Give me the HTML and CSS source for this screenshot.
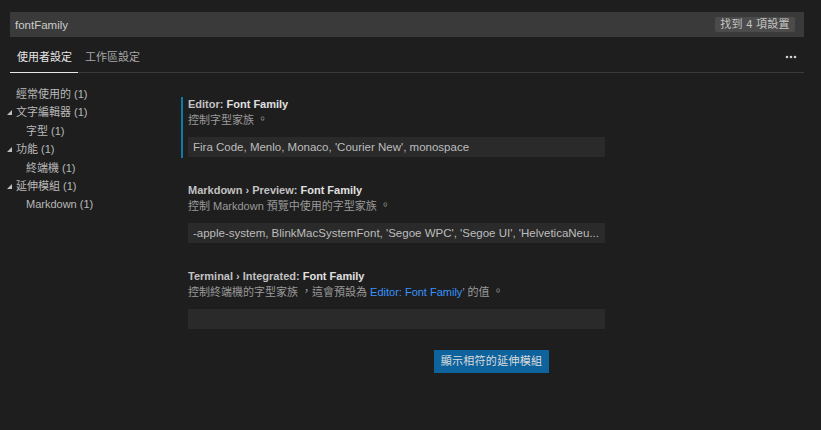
FILE: index.html
```html
<!DOCTYPE html>
<html lang="zh-Hant">
<head>
<meta charset="utf-8">
<title>設定</title>
<link rel="stylesheet" href="styles.css">
</head>
<body>
<div class="page">
  <div class="search">
    <span class="search-text">fontFamily</span>
    <span class="badge">找到 4 項設置</span>
  </div>
  <div class="tabs">
    <div class="tab active">使用者設定</div>
    <div class="tab">工作區設定</div>
    <div class="tabs-spacer"></div>
    <svg class="more" width="12" height="4" viewBox="0 0 12 4"><circle cx="2" cy="2" r="1.3"/><circle cx="6" cy="2" r="1.3"/><circle cx="10" cy="2" r="1.3"/></svg>
  </div>
  <div class="main">
    <div class="tree">
      <div class="row lvl1">經常使用的 (1)</div>
      <div class="row lvl1"><svg class="twist" width="5" height="5" viewBox="0 0 5 5"><polygon points="5,0 5,5 0,5"/></svg>文字編輯器 (1)</div>
      <div class="row lvl2">字型 (1)</div>
      <div class="row lvl1"><svg class="twist" width="5" height="5" viewBox="0 0 5 5"><polygon points="5,0 5,5 0,5"/></svg>功能 (1)</div>
      <div class="row lvl2">終端機 (1)</div>
      <div class="row lvl1"><svg class="twist" width="5" height="5" viewBox="0 0 5 5"><polygon points="5,0 5,5 0,5"/></svg>延伸模組 (1)</div>
      <div class="row lvl2">Markdown (1)</div>
    </div>
    <div class="settings">
      <div class="setting focused">
        <div class="title">Editor: <b>Font Family</b></div>
        <div class="desc">控制字型家族<span class="punct">。</span></div>
        <div class="input">Fira Code, Menlo, Monaco, 'Courier New', monospace</div>
      </div>
      <div class="setting">
        <div class="title">Markdown › Preview: <b>Font Family</b></div>
        <div class="desc">控制 Markdown 預覽中使用的字型家族<span class="punct">。</span></div>
        <div class="input">-apple-system, BlinkMacSystemFont, 'Segoe WPC', 'Segoe UI', 'HelveticaNeu...</div>
      </div>
      <div class="setting">
        <div class="title">Terminal › Integrated: <b>Font Family</b></div>
        <div class="desc">控制終端機的字型家族<span class="punct">，</span>這會預設為 <span class="link">Editor: Font Family</span>' 的值<span class="punct">。</span></div>
        <div class="input"></div>
      </div>
      <div class="btn-row"><span class="btn">顯示相符的延伸模組</span></div>
    </div>
  </div>
</div>
</body>
</html>
```
FILE: styles.css
```css
html, body {
  margin: 0;
  padding: 0;
  background: #1e1e1e;
}
body {
  font-family: "Liberation Sans", "Noto Sans CJK TC", sans-serif;
  color: #cccccc;
  width: 821px;
  height: 430px;
  overflow: hidden;
}
.page {
  padding: 12px 17px 0 10px;
}
.search {
  height: 25px;
  background: #3a3a3a;
  display: flex;
  align-items: center;
  justify-content: space-between;
  padding: 0 9px 0 5px;
}
.search-text {
  font-size: 11.5px;
  color: #cccccc;
}
.badge {
  height: 15px;
  line-height: 15px;
  width: 80px;
  text-align: center;
  background: #4b4b4b;
  color: #c4c4c4;
  font-size: 11px;
  border-radius: 2px;
  letter-spacing: 0.3px;
}
.tabs {
  display: flex;
  align-items: flex-end;
  height: 35px;
  border-bottom: 1px solid #3a3a3a;
}
.tab {
  font-size: 11px;
  color: #a8a8a8;
  padding: 0 6px 0 7px;
  height: 27px;
  line-height: 24px;
  box-sizing: border-box;
}
.tab.active {
  color: #e7e7e7;
  border-bottom: 1px solid #e7e7e7;
  margin-bottom: -1px;
  height: 28px;
}
.tabs-spacer { flex: 1; }
.more {
  fill: #d0d0d0;
  margin: 0 7px 13px 0;
}
.main {
  display: flex;
}
.tree {
  width: 171px;
  padding-top: 12px;
}
.row {
  font-size: 11px;
  height: 18.4px;
  line-height: 18.4px;
  color: #b9b9b9;
  position: relative;
  white-space: nowrap;
}
.lvl1 { padding-left: 6px; }
.lvl2 { padding-left: 16px; }
.twist {
  position: absolute;
  left: -3px;
  top: 7px;
  fill: #c0c0c0;
}
.settings {
  width: 424px;
  padding-top: 24px;
}
.setting {
  border-left: 2px solid transparent;
  padding: 0 0 1px 5px;
  margin-bottom: 25px;
}
.setting.focused {
  border-left-color: #0d7aa8;
}
.title {
  font-size: 11px;
  line-height: 14px;
  color: #c2c2c2;
  font-weight: bold;
}
.title b {
  color: #e0e0e0;
}
.desc {
  font-size: 11px;
  line-height: 16px;
  margin-top: 1px;
  color: #9a9a9a;
  white-space: nowrap;
}
.punct {
  position: relative;
  top: -1px;
  padding-left: 3px;
}
.link { color: #3794ff; }
.input {
  margin-top: 9px;
  height: 20px;
  line-height: 20px;
  background: #2a2a2a;
  color: #bdbdbd;
  font-size: 11.5px;
  padding-left: 5px;
  white-space: nowrap;
  overflow: hidden;
}
.btn-row {
  margin-top: -5px;
  padding-left: 253px;
}
.btn {
  display: inline-block;
  width: 115px;
  height: 23px;
  line-height: 23px;
  text-align: center;
  background: #0e639c;
  color: #dcdcdc;
  font-size: 11px;
  letter-spacing: 0.3px;
}
```
